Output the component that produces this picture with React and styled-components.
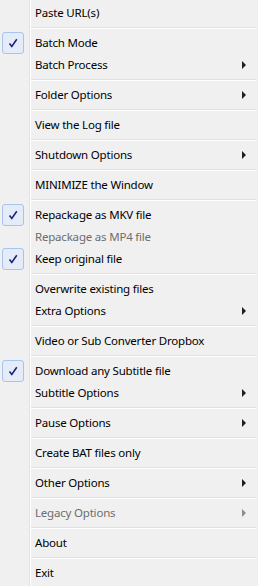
import React from 'react'
import styled, { createGlobalStyle } from 'styled-components'

const items = [
  { label: 'Paste URL(s)' },
  { sep: true },
  { label: 'Batch Mode', checked: true },
  { label: 'Batch Process', sub: true },
  { sep: true },
  { label: 'Folder Options', sub: true },
  { sep: true },
  { label: 'View the Log file' },
  { sep: true },
  { label: 'Shutdown Options', sub: true },
  { sep: true },
  { label: 'MINIMIZE the Window' },
  { sep: true },
  { label: 'Repackage as MKV file', checked: true },
  { label: 'Repackage as MP4 file', disabled: true },
  { label: 'Keep original file', checked: true },
  { sep: true },
  { label: 'Overwrite existing files' },
  { label: 'Extra Options', sub: true },
  { sep: true },
  { label: 'Video or Sub Converter Dropbox' },
  { sep: true },
  { label: 'Download any Subtitle file', checked: true },
  { label: 'Subtitle Options', sub: true },
  { sep: true },
  { label: 'Pause Options', sub: true },
  { sep: true },
  { label: 'Create BAT files only' },
  { sep: true },
  { label: 'Other Options', sub: true },
  { sep: true },
  { label: 'Legacy Options', sub: true, disabled: true },
  { sep: true },
  { label: 'About' },
  { sep: true },
  { label: 'Exit' },
]

const App = () => {
  return (
    <>
      <GlobalStyle />
      <Menu>
        {items.map((item, i) =>
          item.sep ? (
            <Separator key={i} />
          ) : (
            <Item key={i} $disabled={item.disabled}>
              <Gutter>
                {item.checked && (
                  <CheckBox>
                    <svg width="12" height="12" viewBox="0 0 12 12">
                      <path d="M2.5 6.5 L4.8 9.5 L9.8 2.2" fill="none" stroke="#1a237e" strokeWidth="1.6" />
                    </svg>
                  </CheckBox>
                )}
              </Gutter>
              <Label>{item.label}</Label>
              {item.sub && <Arrow $disabled={item.disabled} />}
            </Item>
          )
        )}
      </Menu>
    </>
  )
}

export default App

const GlobalStyle = createGlobalStyle`
  body {
    margin: 0;
    background: #f0f0f0;
  }
`

const Menu = styled.div`
  width: 256px;
  height: 586px;
  box-sizing: border-box;
  padding: 2px 0 2px 0;
  background: linear-gradient(to right, #f0f0f0 29px, #e2e3e3 29px, #e2e3e3 30px, #ffffff 30px, #ffffff 31px, #f0f0f0 31px);
  font-family: "Noto Sans", "Liberation Sans", sans-serif;
  font-size: 11.5px;
  letter-spacing: -0.2px;
  display: flex;
  flex-direction: column;
`

const Item = styled.div`
  height: 22px;
  display: flex;
  align-items: center;
  color: ${(p) => (p.$disabled ? '#6d6d6d' : '#000')};
`

const Gutter = styled.div`
  width: 35px;
  height: 22px;
  flex-shrink: 0;
  padding-left: 2px;
  box-sizing: border-box;
`

const CheckBox = styled.div`
  width: 22px;
  height: 22px;
  box-sizing: border-box;
  border: 1px solid #a8c4ec;
  border-radius: 3px;
  background: #e4ecfa;
  display: flex;
  align-items: center;
  justify-content: center;
`

const Label = styled.span`
  flex: 1;
  white-space: nowrap;
  padding-bottom: 2px;
`

const Arrow = styled.span`
  width: 0;
  height: 0;
  margin-right: 10px;
  border-top: 4px solid transparent;
  border-bottom: 4px solid transparent;
  border-left: 4px solid ${(p) => (p.$disabled ? '#8d8d8d' : '#1e1e1e')};
`

const Separator = styled.div`
  height: 8px;
  margin-left: 31px;
  display: flex;
  flex-direction: column;
  justify-content: center;

  &::before {
    content: '';
    height: 1px;
    background: #e0e0e0;
  }
  &::after {
    content: '';
    height: 1px;
    background: #ffffff;
  }
`
